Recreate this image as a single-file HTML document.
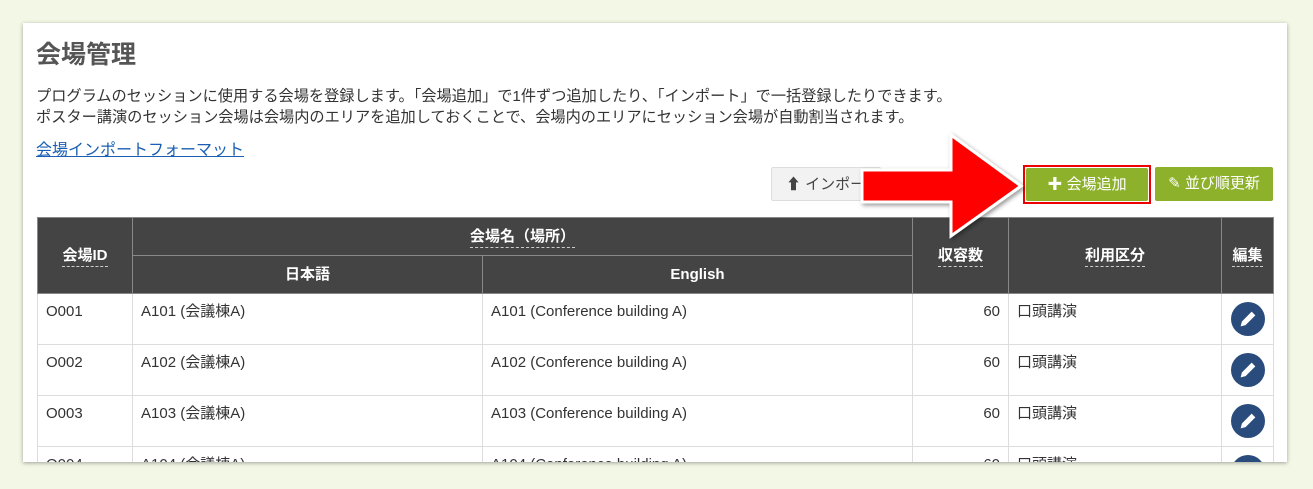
<!DOCTYPE html>
<html><head><meta charset="utf-8"><style>
*{margin:0;padding:0;box-sizing:border-box}
body{width:1313px;height:489px;background:#f3f7e6;font-family:"Liberation Sans","Noto Sans CJK JP",sans-serif;color:#333;position:relative;overflow:hidden}
.panel{position:absolute;left:23px;top:23px;width:1264px;height:439px;background:#fff;box-shadow:0 1px 4px rgba(0,0,0,.35);overflow:hidden}
h1{position:absolute;left:13px;top:12px;font-size:25px;font-weight:bold;color:#555}
.desc{position:absolute;left:13px;top:63px;font-size:15.2px;line-height:21px;color:#333;white-space:nowrap}
.link{position:absolute;left:13px;top:113px;font-size:16px;color:#1a5fb4;text-decoration:underline}
.btn{position:absolute;height:34px;font-size:15px;line-height:34px;text-align:center;border-radius:2px;white-space:nowrap;overflow:hidden}
table{position:absolute;left:14px;top:194px;border-collapse:collapse;font-size:15px;table-layout:fixed}
th{background:#444;color:#fff;font-weight:bold;border:1px solid #888;height:38px;font-size:15px;line-height:20px}
th span{border-bottom:1px dashed #ccc;padding-bottom:2px}
td{border:1px solid #ddd;height:51px;vertical-align:top;padding:8px 8px 0;color:#333;line-height:20px;white-space:nowrap}
.ed{width:34px;height:34px;border-radius:50%;background:#2a4c7c;margin:0 auto;display:flex;align-items:center;justify-content:center}
</style></head><body>
<div class="panel">
<h1>会場管理</h1>
<div class="desc">プログラムのセッションに使用する会場を登録します。「会場追加」で1件ずつ追加したり、「インポート」で一括登録したりできます。<br>ポスター講演のセッション会場は会場内のエリアを追加しておくことで、会場内のエリアにセッション会場が自動割当されます。</div>
<div class="link">会場インポートフォーマット</div>
<div class="btn" style="left:748px;top:144px;width:110px;background:#f2f2f2;border:1px solid #ddd;color:#444;text-align:left;padding-left:14px">⬆ インポート</div>
<div style="position:absolute;left:1000px;top:142px;width:128px;height:39px;border:2px solid #e00"></div>
<div class="btn" style="left:1003px;top:145px;width:122px;height:33px;background:#8db12a;color:#fff">✚ 会場追加</div>
<div class="btn" style="left:1132px;top:144px;width:118px;background:#8db12a;color:#fff">✎ 並び順更新</div>
<table>
<colgroup><col style="width:95px"><col style="width:350px"><col style="width:430px"><col style="width:96px"><col style="width:213px"><col style="width:52px"></colgroup>
<tr><th rowspan="2"><span>会場ID</span></th><th colspan="2"><span>会場名（場所）</span></th><th rowspan="2"><span>収容数</span></th><th rowspan="2"><span>利用区分</span></th><th rowspan="2"><span>編集</span></th></tr>
<tr><th>日本語</th><th>English</th></tr>
<tr><td>O001</td><td>A101 (会議棟A)</td><td>A101 (Conference building A)</td><td style="text-align:right">60</td><td>口頭講演</td><td><div class="ed"><svg width="22" height="22" viewBox="0 0 18 18"><path d="M3 15l1-4 8-8 3 3-8 8z" fill="#fff"/></svg></div></td></tr>
<tr><td>O002</td><td>A102 (会議棟A)</td><td>A102 (Conference building A)</td><td style="text-align:right">60</td><td>口頭講演</td><td><div class="ed"><svg width="22" height="22" viewBox="0 0 18 18"><path d="M3 15l1-4 8-8 3 3-8 8z" fill="#fff"/></svg></div></td></tr>
<tr><td>O003</td><td>A103 (会議棟A)</td><td>A103 (Conference building A)</td><td style="text-align:right">60</td><td>口頭講演</td><td><div class="ed"><svg width="22" height="22" viewBox="0 0 18 18"><path d="M3 15l1-4 8-8 3 3-8 8z" fill="#fff"/></svg></div></td></tr>
<tr><td>O004</td><td>A104 (会議棟A)</td><td>A104 (Conference building A)</td><td style="text-align:right">60</td><td>口頭講演</td><td><div class="ed"></div></td></tr>
</table>
</div>
<svg style="position:absolute;left:0;top:0" width="1313" height="489"><defs><filter id="s"><feDropShadow dx="2" dy="2" stdDeviation="2" flood-opacity=".4"/></filter></defs>
<polygon points="862,170 951,170 951,135 1021,186 951,236 951,202 862,202" fill="#f00" stroke="#fff" stroke-width="3" filter="url(#s)"/></svg>
</body></html>
